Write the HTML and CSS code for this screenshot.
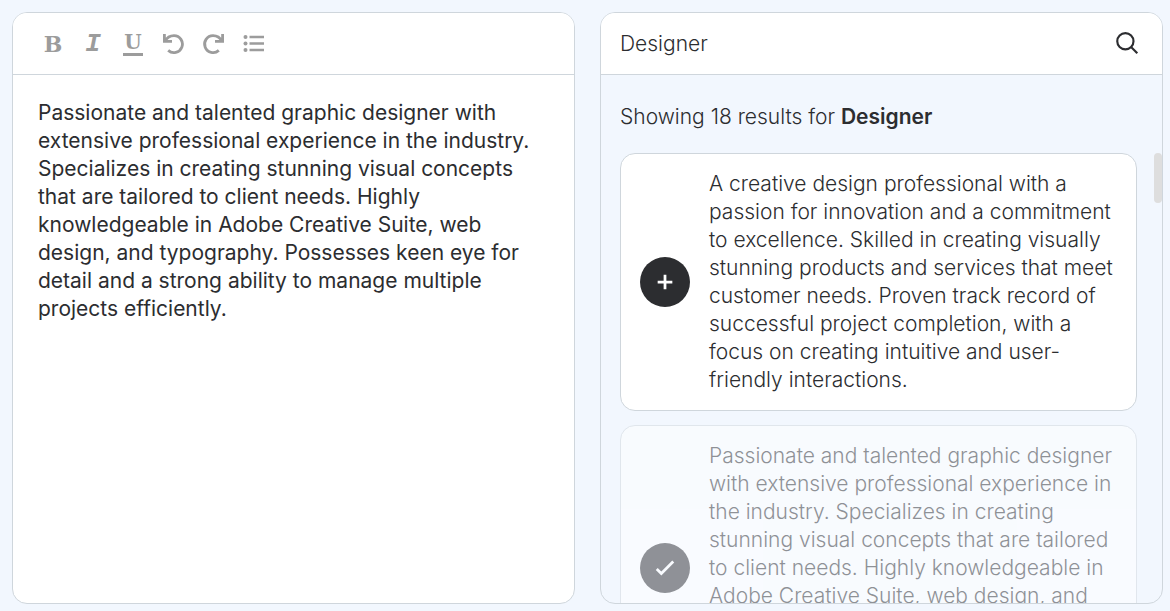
FILE: index.html
```
<!DOCTYPE html>
<html lang="en">
<head>
  <meta charset="UTF-8">
  <meta name="viewport" content="width=device-width, initial-scale=1">
  <title>Resume Summary</title>
  <link rel="stylesheet" href="styles.css">
</head>
<body>
  <section class="panel editor">
    <div class="panel-header toolbar">
      <button type="button" class="tool bold" aria-label="Bold">B</button>
      <button type="button" class="tool italic" aria-label="Italic">I</button>
      <button type="button" class="tool underline" aria-label="Underline">U</button>
      <button type="button" class="tool" aria-label="Undo">
        <svg viewBox="0 0 24 24" fill="none" stroke="currentColor" stroke-width="2.8">
          <path d="M3.400 2v7.400h7.600M4.500 9C6 5.400 9.500 3.600 13 3.600a8.500 8.500 0 1 1 -5.800 14.800"/>
        </svg>
      </button>
      <button type="button" class="tool" aria-label="Redo">
        <svg viewBox="0 0 24 24" fill="none" stroke="currentColor" stroke-width="2.8">
          <path d="M21.600 2v7.400h-7.600M20.500 9C19 5.400 15.500 3.600 12 3.600a8.500 8.500 0 1 0 5.800 14.800"/>
        </svg>
      </button>
      <button type="button" class="tool" aria-label="Bulleted list">
        <svg viewBox="0 0 24 24" fill="none" stroke="currentColor" stroke-width="2.600">
          <path d="M8.500 5h14.500M8.500 11.500h14.500M8.500 18h14.500"/>
          <g fill="currentColor" stroke="none">
            <circle cx="4.500" cy="5" r="2"/>
            <circle cx="4.500" cy="11.500" r="2"/>
            <circle cx="4.500" cy="18" r="2"/>
          </g>
        </svg>
      </button>
    </div>
    <textarea class="editor-text" aria-label="Summary" spellcheck="false">Passionate and talented graphic designer with extensive professional experience in the industry. Specializes in creating stunning visual concepts that are tailored to client needs. Highly knowledgeable in Adobe Creative Suite, web design, and typography. Possesses keen eye for detail and a strong ability to manage multiple projects efficiently.</textarea>
  </section>

  <section class="panel results">
    <form class="panel-header search">
      <input type="text" class="search-input" aria-label="Search by job title" value="Designer">
      <button type="button" class="search-button" aria-label="Search">
        <svg viewBox="0 0 24 24" fill="none" stroke="currentColor" stroke-width="2">
          <circle cx="10.500" cy="9.500" r="7.500"/>
          <path d="M16 15l5.500 5.500"/>
        </svg>
      </button>
    </form>
    <div class="results-body">
      <p class="results-count">Showing 18 results for <strong>Designer</strong></p>
      <div class="card">
        <button type="button" class="card-button" aria-label="Add">
          <svg viewBox="0 0 24 24" fill="none" stroke="currentColor" stroke-width="3">
            <path d="M12 4v16M4 12h16"/>
          </svg>
        </button>
        <p>A creative design professional with a passion for innovation and a commitment to excellence. Skilled in creating visually stunning products and services that meet customer needs. Proven track record of successful project completion, with a focus on creating intuitive and user-friendly interactions.</p>
      </div>
      <div class="card added">
        <button type="button" class="card-button" aria-label="Added">
          <svg viewBox="0 0 24 24" fill="none" stroke="currentColor" stroke-width="3">
            <path d="M3 13l5 5L21 5"/>
          </svg>
        </button>
        <p>Passionate and talented graphic designer with extensive professional experience in the industry. Specializes in creating stunning visual concepts that are tailored to client needs. Highly knowledgeable in Adobe Creative Suite, web design, and typography. Possesses keen eye for detail and a strong ability to manage multiple projects efficiently.</p>
      </div>
    </div>
    <div class="scroll-thumb"></div>
  </section>
</body>
</html>
```
FILE: styles.css
```
* {
  box-sizing: border-box;
}
body {
  display: grid;
  grid-template-columns: 1fr 1fr;
  grid-template-rows: minmax(0, 1fr);
  gap: 25px;
  height: 100vh;
  margin: 0;
  padding: 12px 7px 7px 12px;
  background: #f2f7fe;
  color: #2c2d30;
  font-family: Inter, "Liberation Sans", sans-serif;
  font-size: 21px;
  line-height: 28px;
}
button {
  display: flex;
  align-items: center;
  justify-content: center;
  flex: none;
  padding: 0;
  border: 0;
  background: none;
  cursor: pointer;
}
p {
  margin: 0;
}

/* Panels */
.panel {
  position: relative;
  display: flex;
  flex-direction: column;
  min-width: 0;
  border: 1px solid #cfd6dc;
  border-radius: 15px;
  overflow: hidden;
}
.panel-header {
  display: flex;
  align-items: center;
  flex: none;
  height: 62px;
  border-bottom: 1px solid #cfd6dc;
  background: #fff;
}

/* Editor */
.editor {
  background: #fff;
}
.toolbar {
  gap: 16px;
  padding: 0 28px;
}
.tool {
  width: 24px;
  height: 24px;
  color: #9c9c9c;
  font-family: "DejaVu Serif", serif;
  font-size: 22px;
  font-weight: bold;
  line-height: 24px;
}
.tool svg {
  width: 24px;
  height: 24px;
}
.italic {
  font-family: "Liberation Mono", monospace;
  font-size: 26px;
  font-style: italic;
}
.underline {
  width: 20px;
  margin: 0 2px;
  border-bottom: 3px solid #9c9c9c;
  font-size: 20px;
  line-height: 20px;
}
.editor-text {
  flex: 1;
  width: 100%;
  padding: 24px 35px 24px 25px;
  border: 0;
  outline: 0;
  background: none;
  color: inherit;
  font: inherit;
  resize: none;
}

/* Search results */
.results {
  font-weight: 300;
}
.search {
  padding: 0 22px 0 19px;
}
.search-input {
  flex: 1;
  min-width: 0;
  padding: 0;
  border: 0;
  outline: 0;
  color: inherit;
  font: inherit;
}
.search-button {
  color: #2c2d30;
}
.search-button svg {
  width: 26px;
  height: 26px;
}
.results-body {
  flex: 1;
  min-height: 0;
  padding: 28px 25px 0 19px;
  overflow: hidden;
}
.results-count {
  margin-bottom: 22px;
}
.results-count strong {
  font-weight: 600;
}
.card {
  display: flex;
  align-items: center;
  gap: 19px;
  margin-bottom: 14px;
  padding: 16px 19px;
  border: 1px solid #cfd6dc;
  border-radius: 15px;
  background: #fff;
}
.card-button {
  width: 50px;
  height: 50px;
  border-radius: 50%;
  background: #2c2d30;
  color: #fff;
}
.card-button svg {
  width: 22px;
  height: 22px;
}
.added {
  opacity: 0.5;
}
.scroll-thumb {
  position: absolute;
  top: 140px;
  right: 0;
  width: 8px;
  height: 50px;
  border-radius: 4px;
  background: #dedede;
}
```
